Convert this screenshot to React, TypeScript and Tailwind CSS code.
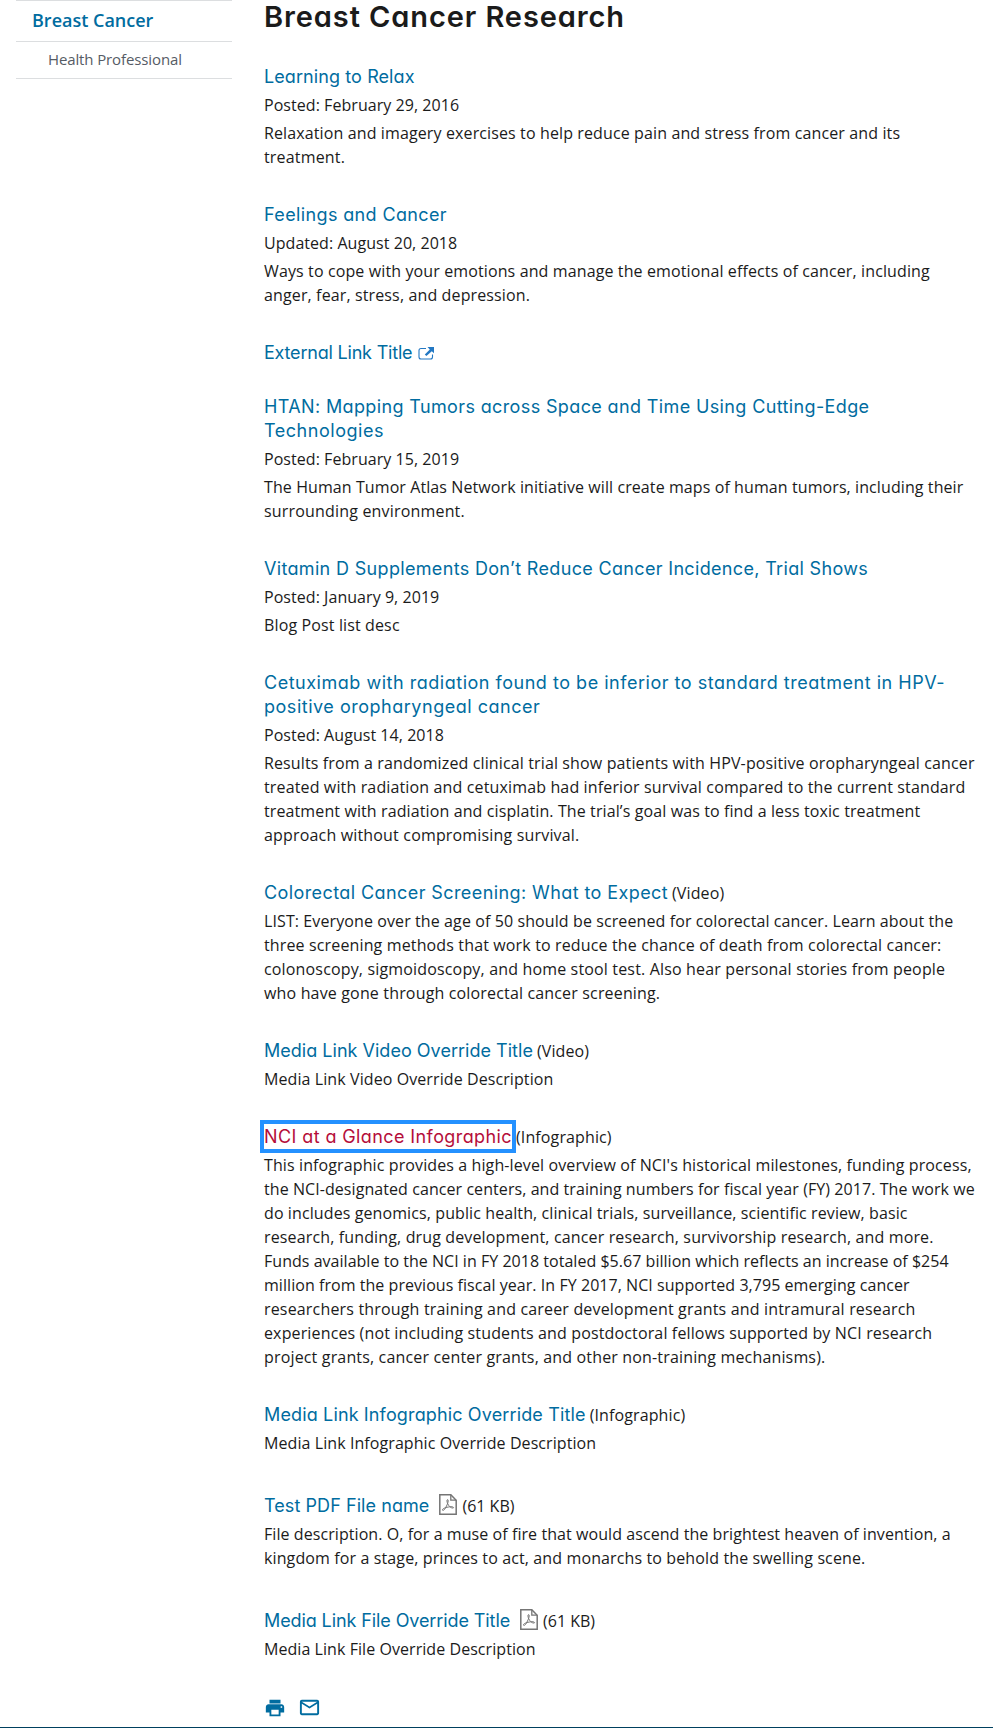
import { MdMailOutline, MdPrint } from 'react-icons/md';

type Line = [text: string, tracking: string];

interface Item {
  title: Line[];
  focused?: boolean;
  external?: boolean;
  pdf?: boolean;
  note?: string;
  date?: string;
  body?: Line[];
}

const items: Item[] = [
  {
    title: [['Learning to Relax', 'tracking-[0.09px]']],
    date: 'Posted: February 29, 2016',
    body: [
      ['Relaxation and imagery exercises to help reduce pain and stress from cancer and its', 'tracking-[0.12px]'],
      ['treatment.', 'tracking-[0.17px]'],
    ],
  },
  {
    title: [['Feelings and Cancer', 'tracking-[0.37px]']],
    date: 'Updated: August 20, 2018',
    body: [
      ['Ways to cope with your emotions and manage the emotional effects of cancer, including', 'tracking-[0.12px]'],
      ['anger, fear, stress, and depression.', 'tracking-[0.13px]'],
    ],
  },
  { title: [['External Link Title', 'tracking-[-0.2px]']], external: true },
  {
    title: [
      ['HTAN: Mapping Tumors across Space and Time Using Cutting-Edge', 'tracking-[0.37px]'],
      ['Technologies', 'tracking-[0.53px]'],
    ],
    date: 'Posted: February 15, 2019',
    body: [
      ['The Human Tumor Atlas Network initiative will create maps of human tumors, including their', 'tracking-[0.09px]'],
      ['surrounding environment.', 'tracking-[0.18px]'],
    ],
  },
  {
    title: [['Vitamin D Supplements Don’t Reduce Cancer Incidence, Trial Shows', 'tracking-[0.33px]']],
    date: 'Posted: January 9, 2019',
    body: [['Blog Post list desc', 'tracking-[0.13px]']],
  },
  {
    title: [
      ['Cetuximab with radiation found to be inferior to standard treatment in HPV-', 'tracking-[0.52px]'],
      ['positive oropharyngeal cancer', 'tracking-[0.52px]'],
    ],
    date: 'Posted: August 14, 2018',
    body: [
      ['Results from a randomized clinical trial show patients with HPV-positive oropharyngeal cancer', 'tracking-[0.13px]'],
      ['treated with radiation and cetuximab had inferior survival compared to the current standard', 'tracking-[0.14px]'],
      ['treatment with radiation and cisplatin. The trial’s goal was to find a less toxic treatment', 'tracking-[0.11px]'],
      ['approach without compromising survival.', 'tracking-[0.17px]'],
    ],
  },
  {
    title: [['Colorectal Cancer Screening: What to Expect', 'tracking-[0.41px]']],
    note: '(Video)',
    body: [
      ['LIST: Everyone over the age of 50 should be screened for colorectal cancer. Learn about the', 'tracking-[0.1px]'],
      ['three screening methods that work to reduce the chance of death from colorectal cancer:', 'tracking-[0.14px]'],
      ['colonoscopy, sigmoidoscopy, and home stool test. Also hear personal stories from people', 'tracking-[0.16px]'],
      ['who have gone through colorectal cancer screening.', 'tracking-[0.16px]'],
    ],
  },
  {
    title: [['Media Link Video Override Title', 'tracking-[0.02px]']],
    note: '(Video)',
    body: [['Media Link Video Override Description', 'tracking-[0.09px]']],
  },
  {
    title: [['NCI at a Glance Infographic', 'tracking-[0.4px]']],
    focused: true,
    note: '(Infographic)',
    body: [
      ["This infographic provides a high-level overview of NCI's historical milestones, funding process,", 'tracking-[0.11px]'],
      ['the NCI-designated cancer centers, and training numbers for fiscal year (FY) 2017. The work we', 'tracking-[0.07px]'],
      ['do includes genomics, public health, clinical trials, surveillance, scientific review, basic', 'tracking-[0.1px]'],
      ['research, funding, drug development, cancer research, survivorship research, and more.', 'tracking-[0.14px]'],
      ['Funds available to the NCI in FY 2018 totaled $5.67 billion which reflects an increase of $254', 'tracking-[0.03px]'],
      ['million from the previous fiscal year. In FY 2017, NCI supported 3,795 emerging cancer', 'tracking-[0.05px]'],
      ['researchers through training and career development grants and intramural research', 'tracking-[0.17px]'],
      ['experiences (not including students and postdoctoral fellows supported by NCI research', 'tracking-[0.14px]'],
      ['project grants, cancer center grants, and other non-training mechanisms).', 'tracking-[0.16px]'],
    ],
  },
  {
    title: [['Media Link Infographic Override Title', 'tracking-[0.14px]']],
    note: '(Infographic)',
    body: [['Media Link Infographic Override Description', 'tracking-[0.08px]']],
  },
  {
    title: [['Test PDF File name', 'tracking-[0.07px]']],
    pdf: true,
    note: '(61 KB)',
    body: [
      ['File description. O, for a muse of fire that would ascend the brightest heaven of invention, a', 'tracking-[0.07px]'],
      ['kingdom for a stage, princes to act, and monarchs to behold the swelling scene.', 'tracking-[0.12px]'],
    ],
  },
  {
    title: [['Media Link File Override Title', 'tracking-[-0.1px]']],
    pdf: true,
    note: '(61 KB)',
    body: [['Media Link File Override Description', 'tracking-[0.06px]']],
  },
];

function ExternalIcon() {
  return (
    <svg className="ml-[5.5px] inline-block h-[13px] w-4 align-[-1px]" viewBox="0 0 16 13" fill="none">
      <path d="M8 1.5H3Q1 1.5 1 3.5V10Q1 12 3 12H12.5Q14.5 12 14.5 10V7.5" stroke="#2378c3" strokeWidth="1.1" />
      <path d="M9.5 0H16V6.2L13.8 4.2L8.4 9L6.8 7.4L11.8 2.4Z" fill="#2378c3" />
    </svg>
  );
}

function PdfIcon() {
  return (
    <svg className="mr-[5px] ml-[10px] h-[21px] w-[18px] shrink-0" viewBox="0 0 18 21" fill="none" stroke="#757575">
      <path d="M.8 .8H11.8L17.2 6.2V20.2H.8Z" strokeWidth="1.5" />
      <path d="M11.8 .8V6.2H17.2" strokeWidth="1.3" />
      <path
        d="M8.6 5.6C7.5 5.6 8 8 8.6 9.5C9.6 12 12 14.2 14 14.1C15.4 13.8 14 12.5 11.8 12.7C8.5 13 4.2 14 3.5 15.5C3.1 16.7 4.6 16.9 5.8 15C7.4 12.6 9.2 8.8 9.2 6.8C9.2 6 9 5.6 8.6 5.6Z"
        strokeWidth="1"
      />
    </svg>
  );
}

function ListItem({ item }: { item: Item }) {
  const link = item.focused
    ? 'inline-block h-[25px] -mt-px leading-[25px] text-[#b50d3a] outline-4 outline-[#2491ff]'
    : 'text-[#006ca0]';
  return (
    <li className={item.pdf ? 'flex flex-col gap-1 pt-[5px]' : 'flex flex-col gap-1'}>
      <div className="flex leading-6 whitespace-nowrap">
        <a className="font-['Inter',sans-serif] text-[18px] leading-6 [font-feature-settings:'cv11']">
          {item.title.map(([text, tracking], i) => (
            <span key={text} className="block h-6 leading-6">
              <span className={`${link} ${tracking}`}>{text}</span>
              {item.external && i === item.title.length - 1 && <ExternalIcon />}
            </span>
          ))}
        </a>
        {item.pdf && <PdfIcon />}
        {item.note && (
          <span className={item.pdf ? 'text-[#1b1b1b]' : 'pl-1 tracking-[0.12px] text-[#1b1b1b]'}>{item.note}</span>
        )}
      </div>
      {item.date && <p className="leading-6 tracking-[0.05px] text-[#1b1b1b]">{item.date}</p>}
      {item.body && (
        <p className="mb-1 leading-6 whitespace-nowrap text-[#1b1b1b]">
          {item.body.map(([text, tracking]) => (
            <span key={text} className={`block ${tracking}`}>
              {text}
            </span>
          ))}
        </p>
      )}
    </li>
  );
}

export default function App() {
  return (
    <div className="flex h-[1728px] w-[993px] flex-col overflow-hidden border-b border-[#00405f] bg-white font-['Open_Sans',sans-serif]">
      <div className="flex grow">
        <nav className="ml-4 w-[216px] shrink-0">
          <div className="h-[41px] border-t border-[#dcdee0] pl-4 text-[18px] leading-[39px] font-semibold text-[#006ca0]">
            Breast Cancer
          </div>
          <div className="h-[38px] border-y border-[#dcdee0] pl-8 text-[15px] leading-[34px] tracking-[-0.12px] text-[#565c65]">
            Health Professional
          </div>
        </nav>
        <main className="ml-8 flex grow flex-col">
          <h1 className="h-[65px] font-['Inter',sans-serif] text-[29px] leading-[34px] font-semibold tracking-[0.9px] text-[#1b1b1b] [font-feature-settings:'cv11']">
            Breast Cancer Research
          </h1>
          <ul className="flex flex-col gap-[30px]">
            {items.map((item) => (
              <ListItem key={item.title[0][0]} item={item} />
            ))}
          </ul>
          <div className="flex items-center gap-3 pt-[31px] text-[#006ca0]">
            <MdPrint className="size-[22px]" />
            <MdMailOutline className="size-[23px]" />
          </div>
        </main>
      </div>
    </div>
  );
}
